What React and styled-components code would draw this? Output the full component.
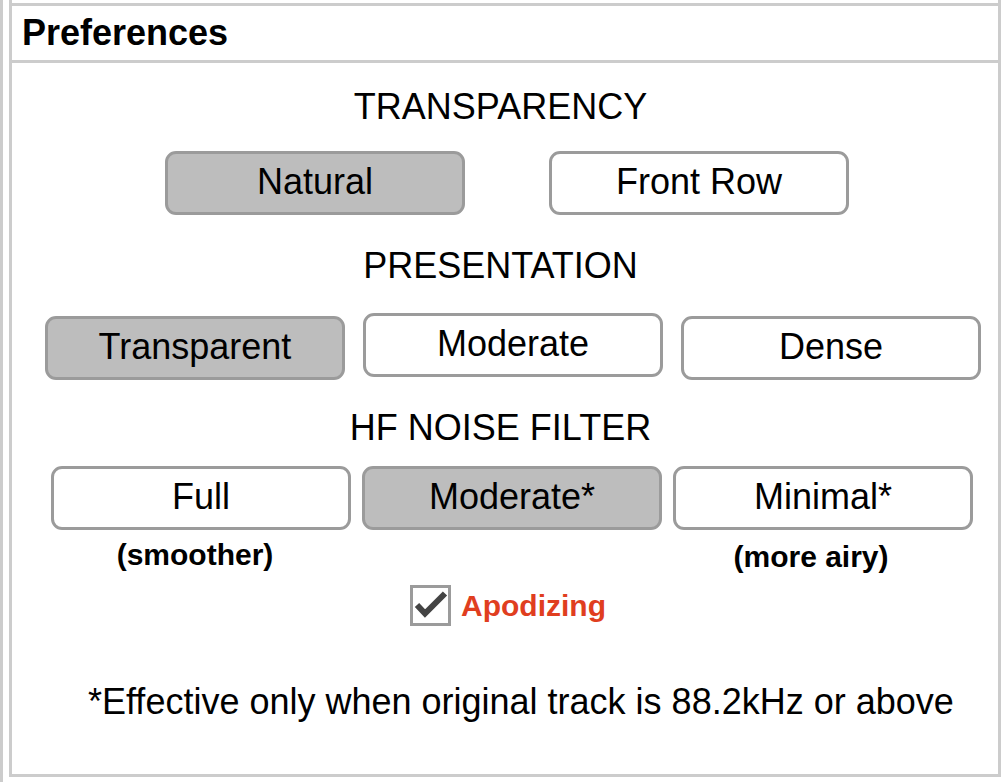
import React, { useState } from 'react'
import styled, { createGlobalStyle } from 'styled-components'

const GlobalStyle = createGlobalStyle`
    body {
        margin: 0;
        background: #fff;
        font-family: "Liberation Sans", Arial, sans-serif;
        color: #000;
    }
`

const sections = [
    {
        title: 'TRANSPARENCY',
        top: 23,
        rowTop: 24,
        start: 153,
        gap: 84,
        options: [{ label: 'Natural' }, { label: 'Front Row' }],
    },
    {
        title: 'PRESENTATION',
        top: 30,
        rowTop: 30,
        start: 33,
        gap: 18,
        options: [{ label: 'Transparent' }, { label: 'Moderate', lift: true }, { label: 'Dense' }],
    },
    {
        title: 'HF NOISE FILTER',
        top: 27,
        rowTop: 18,
        start: 39,
        gap: 11,
        options: [{ label: 'Full' }, { label: 'Moderate*' }, { label: 'Minimal*' }],
    },
]

const App = () => {
    const [picked, setPicked] = useState(['Natural', 'Transparent', 'Moderate*'])
    const [apodizing, setApodizing] = useState(true)

    const pick = (index, label) => {
        const next = [...picked]
        next[index] = label
        setPicked(next)
    }

    return (
        <Page>
            <GlobalStyle />
            <Panel>
                <Header>
                    <Title>Preferences</Title>
                </Header>

                {sections.map((section, index) => (
                    <React.Fragment key={section.title}>
                        <SectionTitle $top={section.top}>{section.title}</SectionTitle>
                        <ButtonRow $top={section.rowTop} $start={section.start} $gap={section.gap}>
                            {section.options.map((opt) => (
                                <Choice
                                    key={opt.label}
                                    $selected={picked[index] === opt.label}
                                    $lift={opt.lift}
                                    onClick={() => pick(index, opt.label)}
                                >
                                    {opt.label}
                                </Choice>
                            ))}
                        </ButtonRow>
                    </React.Fragment>
                ))}

                <HintRow>
                    <Hint>(smoother)</Hint>
                    <Hint />
                    <Hint $drop={2}>(more airy)</Hint>
                </HintRow>

                <CheckRow onClick={() => setApodizing(!apodizing)}>
                    <CheckBox>
                        {apodizing && (
                            <svg width="35" height="35" viewBox="0 0 35 35">
                                <polyline
                                    points="4,17 12,25.5 32,5.5"
                                    fill="none"
                                    stroke="#444"
                                    strokeWidth="6"
                                />
                            </svg>
                        )}
                    </CheckBox>
                    <CheckLabel>Apodizing</CheckLabel>
                </CheckRow>

                <Footnote>*Effective only when original track is 88.2kHz or above</Footnote>
            </Panel>
        </Page>
    )
}

export default App

const Page = styled.div`
    height: 782px;
    border-left: 3px solid #cccccc;
    padding-left: 6px;
    box-sizing: border-box;
`

const Panel = styled.div`
    width: 992px;
    height: 777px;
    box-sizing: border-box;
    border: 3px solid #cccccc;
    border-top: none;
    display: flex;
    flex-direction: column;
`

const Header = styled.div`
    margin-top: 3px;
    height: 60px;
    box-sizing: border-box;
    border-top: 3px solid #cccccc;
    border-bottom: 3px solid #cccccc;
    padding: 6px 0 0 10px;
`

const Title = styled.div`
    font-size: 36px;
    line-height: 41px;
    font-weight: 700;
`

const SectionTitle = styled.div`
    margin-top: ${(p) => p.$top}px;
    padding-right: 9px;
    font-size: 36px;
    line-height: 41px;
    text-align: center;
`

const ButtonRow = styled.div`
    display: flex;
    align-items: flex-start;
    margin-top: ${(p) => p.$top}px;
    padding-left: ${(p) => p.$start}px;
    gap: ${(p) => p.$gap}px;
`

const Choice = styled.button`
    width: 300px;
    height: 64px;
    box-sizing: border-box;
    margin-top: ${(p) => (p.$lift ? -3 : 0)}px;
    margin-bottom: ${(p) => (p.$lift ? 3 : 0)}px;
    padding: 0 0 3px;
    border: 3px solid #9b9b9b;
    border-radius: 11px;
    background-color: ${(p) => (p.$selected ? '#bdbdbd' : '#ffffff')};
    font-family: "Liberation Sans", Arial, sans-serif;
    font-size: 36px;
    line-height: 41px;
    color: #000;
    cursor: pointer;
`

const HintRow = styled.div`
    display: flex;
    gap: 8px;
    padding-left: 33px;
    margin-top: 8px;
`

const Hint = styled.div`
    width: 300px;
    padding-top: ${(p) => p.$drop || 0}px;
    font-size: 30px;
    line-height: 34px;
    font-weight: 700;
    text-align: center;
`

const CheckRow = styled.div`
    display: flex;
    align-items: center;
    justify-content: center;
    gap: 10px;
    margin-top: 11px;
    padding-left: 6px;
    cursor: pointer;
`

const CheckBox = styled.div`
    width: 41px;
    height: 41px;
    box-sizing: border-box;
    border: 3px solid #9b9b9b;
    background: #fff;
`

const CheckLabel = styled.div`
    font-size: 30px;
    line-height: 34px;
    font-weight: 700;
    color: #e03e1f;
`

const Footnote = styled.div`
    margin-top: 55px;
    padding-left: 76px;
    font-size: 36px;
    line-height: 41px;
`
